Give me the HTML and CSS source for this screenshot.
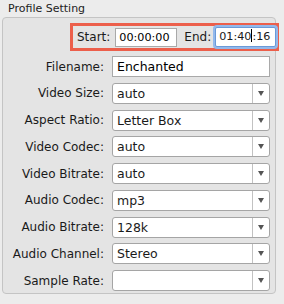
FILE: index.html
```html
<html>
  <head>
    <meta http-equiv="content-type" content="text/html; charset=utf-8" />
    <link rel="stylesheet" href="styles.css">
  </head>
  <body>
    <div class="legend">Profile Setting</div>
    <div class="group">
      <div class="time-row">
        <span class="lbl">Start:</span>
        <input type="text" class="time" value="00:00:00">
        <span class="lbl">End:</span>
        <div class="time focused">01:40<b class="caret"></b>:16</div>
      </div>
      <div class="form">
        <label>Filename:</label>
        <input type="text" class="txt" value="Enchanted">
        <label>Video Size:</label>
        <div class="select"><span>auto</span><i></i></div>
        <label>Aspect Ratio:</label>
        <div class="select"><span>Letter Box</span><i></i></div>
        <label>Video Codec:</label>
        <div class="select"><span>auto</span><i></i></div>
        <label>Video Bitrate:</label>
        <div class="select"><span>auto</span><i></i></div>
        <label>Audio Codec:</label>
        <div class="select"><span>mp3</span><i></i></div>
        <label>Audio Bitrate:</label>
        <div class="select"><span>128k</span><i></i></div>
        <label>Audio Channel:</label>
        <div class="select"><span>Stereo</span><i></i></div>
        <label>Sample Rate:</label>
        <div class="select"><span></span><i></i></div>
      </div>
    </div>
  </body>
</html>
```
FILE: styles.css
```css
body {
  margin: 0;
  padding: 0;
  background: #ececec;
  font-family: "DejaVu Sans", sans-serif;
  font-size: 12px;
  color: #1a1a1a;
}
.legend {
  font-size: 11px;
  padding: 2px 0 0 8px;
  height: 15px;
  color: #222;
}
.group {
  margin: 0 8px 0 2px;
  height: 277px;
  border: 1px solid #c4c4c4;
  border-radius: 4px;
  background: #e4e4e4;
  box-sizing: border-box;
}
.time-row {
  display: flex;
  align-items: center;
  height: 28px;
  box-sizing: border-box;
  margin: 5px -4px 0 67px;
  border: 3px solid #ec5f4b;
  padding-left: 4px;
}
.time-row .lbl {
  margin-right: 5px;
}
.time {
  appearance: none;
  -webkit-appearance: none;
  font: inherit;
  font-size: 11.2px;
  width: 62px;
  height: 19px;
  line-height: 17px;
  padding: 0 3px;
  border: 1px solid #a9a9a9;
  box-sizing: border-box;
  background: #fff;
  margin-right: 7px;
  outline: none;
}
.time.focused {
  width: 63px;
  height: 20px;
  line-height: 18px;
  margin-right: 0;
  margin-left: -1px;
  border: 1px solid #6b9ad8;
  border-radius: 2px;
  box-shadow: 0 0 0 2px #93b9ec;
}
.caret {
  display: inline-block;
  width: 1px;
  height: 13px;
  background: #000;
  vertical-align: -2px;
}
.form {
  display: grid;
  grid-template-columns: 101px 158px;
  column-gap: 8px;
  row-gap: 5.75px;
  margin-top: 5px;
}
.form label {
  text-align: right;
  align-self: center;
}
.txt {
  appearance: none;
  -webkit-appearance: none;
  font: inherit;
  font-size: 12.5px;
  height: 21px;
  padding: 0 4px;
  border: 1px solid #a9a9a9;
  box-sizing: border-box;
  background: #fff;
  outline: none;
}
.select {
  display: flex;
  height: 21px;
  box-sizing: border-box;
  border: 1px solid #a5a5a5;
  border-radius: 3px;
  background: #fff;
  font-size: 12.5px;
}
.select span {
  flex: 1;
  padding-left: 4px;
  line-height: 19px;
}
.select i {
  width: 16px;
  border-left: 1px solid #c2c2c2;
  display: flex;
  align-items: center;
  justify-content: center;
}
.select i::after {
  content: "";
  border-left: 3.5px solid transparent;
  border-right: 3.5px solid transparent;
  border-top: 5px solid #555;
}
```
